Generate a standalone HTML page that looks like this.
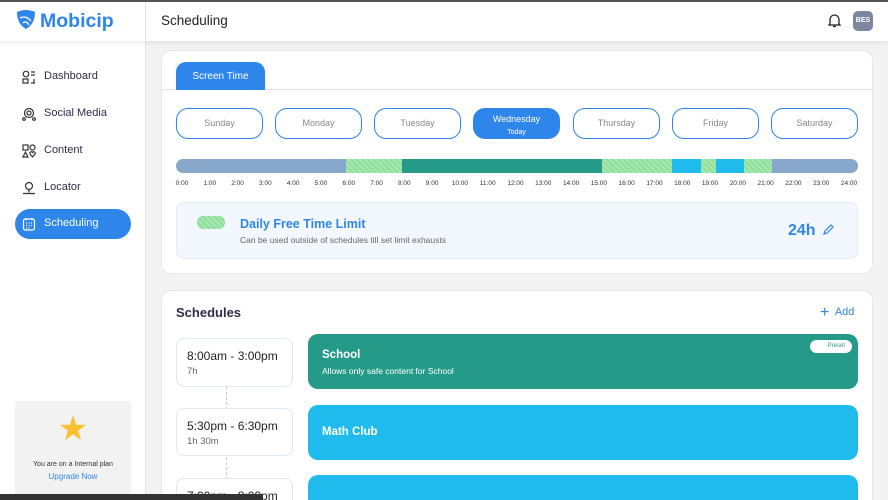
<!DOCTYPE html>
<html><head><style>
*{box-sizing:border-box;margin:0;padding:0}
html,body{width:888px;height:500px;overflow:hidden}
body{background:#f3f3f3;font-family:"Liberation Sans",sans-serif;position:relative;color:#2a2f45;line-height:1.2}
.abs{position:absolute}
.hdr{left:0;top:0;width:888px;height:41px;background:#fff;border-top:2px solid #555;box-shadow:0 2px 4px rgba(0,0,0,.08);z-index:2}
.side{left:0;top:41px;width:146px;height:459px;background:#fff;border-right:1px solid #e6e6e6}
.nav{position:absolute;left:22px;font-size:11px;color:#2a2f45;display:flex;align-items:center;gap:8px;height:16px}
.nav svg{flex:none}
.card{background:#fff;border-radius:10px;border:1px solid #e8e8e8}
.pill{position:absolute;top:108px;width:87px;height:31px;border:1.5px solid #2f86ea;border-radius:12px;font-size:9px;color:#888;text-align:center;line-height:29px}
.tk{position:absolute;top:180px;font-size:6.5px;color:#333;transform:translateX(-50%)}
.seg{position:absolute;top:159px;height:14px}
.g{background:repeating-linear-gradient(45deg,#8fdf9b 0 2px,#a7e8b2 2px 4px)}
.tm{position:absolute;left:176px;width:117px;background:#fff;border:1px solid #dde8f3;border-radius:8px;padding:10px 10px}
.tm b{display:block;font-weight:normal;font-size:12px;line-height:14px;color:#222;margin-bottom:3px}
.tm span{display:block;font-size:9.5px;line-height:11px;color:#666}
.sc{position:absolute;left:308px;width:550px;border-radius:10px;color:#fff;padding-left:14px}
</style></head><body>
<div class="abs hdr">
 <svg class="abs" style="left:15px;top:7px" width="22" height="22" viewBox="0 0 22 22"><path d="M2 3 Q11 -1 20 3 Q20 15 11 20 Q2 15 2 3Z" fill="#2f86ea"/><path d="M5 9 Q11 6 16 12 M8 14 Q11 11 14 16" stroke="#fff" stroke-width="1.3" fill="none"/></svg>
 <div class="abs" style="left:40px;top:8px;font-size:19.5px;line-height:22px;font-weight:bold;color:#2f86ea">Mobicip</div>
 <div class="abs" style="left:145px;top:0;width:1px;height:39px;background:#e4e4e4"></div>
 <div class="abs" style="left:161px;top:11px;font-size:13.5px;line-height:16px;color:#222">Scheduling</div>
 <svg class="abs" style="left:828px;top:11px" width="13" height="15" viewBox="0 0 13 15"><path d="M2 11 V6.5 A4.5 4.5 0 0 1 11 6.5 V11 L12 12 H1Z M5 13.5 H8" stroke="#222" stroke-width="1.3" fill="none"/></svg>
 <div class="abs" style="left:853px;top:9px;width:20px;height:20px;border-radius:5px;background:#7c86a0;color:#fff;font-size:7px;font-weight:bold;text-align:center;line-height:20px">BES</div>
</div>
<div class="abs side">
 <div class="nav" style="top:28px"><svg width="14" height="14" viewBox="0 0 14 14" fill="none" stroke="#333" stroke-width="1.2"><circle cx="4" cy="4" r="2.8"/><path d="M9 2h4M9 5h4M1 9h5v4H1zM9 13h4M12 9v4"/></svg>Dashboard</div>
 <div class="nav" style="top:65px"><svg width="14" height="14" viewBox="0 0 14 14" fill="none" stroke="#333" stroke-width="1.2"><circle cx="7" cy="6" r="4.5"/><circle cx="7" cy="6" r="2"/><circle cx="2" cy="12" r="1.3"/><circle cx="12" cy="12" r="1.3"/></svg>Social Media</div>
 <div class="nav" style="top:102px"><svg width="14" height="14" viewBox="0 0 14 14" fill="none" stroke="#333" stroke-width="1.2"><rect x="1" y="1" width="5" height="5"/><circle cx="10.5" cy="3.5" r="2.5"/><path d="M3.5 8L6 13H1z"/><path d="M10.5 13L8 10a1.4 1.4 0 0 1 2.5-1.5A1.4 1.4 0 0 1 13 10z"/></svg>Content</div>
 <div class="nav" style="top:139px"><svg width="14" height="14" viewBox="0 0 14 14" fill="none" stroke="#333" stroke-width="1.2"><circle cx="7" cy="5" r="3.5"/><path d="M7 8.5v3M1 12.5h12"/></svg>Locator</div>
 <div class="abs" style="left:15px;top:168px;width:116px;height:30px;border-radius:15px;background:#2f86ea"></div>
 <div class="nav" style="top:175px;color:#fff"><svg width="14" height="14" viewBox="0 0 14 14" fill="none" stroke="#fff" stroke-width="1.2"><rect x="1.5" y="2" width="11" height="11" rx="2"/><path d="M4 1v2M10 1v2M4 6h1M6.5 6h1M9 6h1M4 8.5h1M6.5 8.5h1M9 8.5h1M4 11h1M6.5 11h1"/></svg>Scheduling</div>
 <div class="abs" style="left:15px;top:360px;width:116px;height:100px;background:#f2f2f2;border-radius:3px;text-align:center">
  <div style="font-size:34px;color:#fbc02d;margin-top:8px;line-height:40px">★</div>
  <div style="font-size:7px;color:#333;margin-top:12px">You are on a Internal plan</div>
  <div style="font-size:8px;color:#2f86ea;margin-top:3px">Upgrade Now</div>
 </div>
</div>
<div class="abs card" style="left:161px;top:50px;width:712px;height:224px"></div>
<div class="abs" style="left:162px;top:89px;width:710px;height:1px;background:#e4e4e4"></div>
<div class="abs" style="left:176px;top:62px;width:89px;height:28px;background:#2f86ea;border-radius:10px 10px 0 0;color:#fff;font-size:10px;text-align:center;line-height:30px">Screen Time</div>
<div class="pill" style="left:176px">Sunday</div>
<div class="pill" style="left:275px">Monday</div>
<div class="pill" style="left:374px">Tuesday</div>
<div class="pill" style="left:473px;background:#2f86ea;color:#fff;line-height:12px;padding-top:4px;font-size:9px;width:87px">Wednesday<br><span style="font-size:7px">Today</span></div>
<div class="pill" style="left:573px">Thursday</div>
<div class="pill" style="left:672px">Friday</div>
<div class="pill" style="left:771px">Saturday</div>
<div class="seg" style="left:176px;width:682px;background:#87a7cb;border-radius:7px"></div>
<div class="seg g" style="left:346px;width:57px"></div>
<div class="seg" style="left:402px;width:200px;background:#269a89"></div>
<div class="seg g" style="left:602px;width:71px"></div>
<div class="seg" style="left:672px;width:30px;background:#1fbbec"></div>
<div class="seg g" style="left:701px;width:15px"></div>
<div class="seg" style="left:716px;width:28px;background:#1fbbec"></div>
<div class="seg g" style="left:744px;width:28px"></div>
<div id="tks"></div>
<div class="abs" style="left:176px;top:202px;width:682px;height:57px;background:#f3f8fe;border:1px solid #e2ecf7;border-radius:8px"></div>
<div class="abs g" style="left:197px;top:216px;width:28px;height:13px;border-radius:6px"></div>
<div class="abs" style="left:240px;top:217px;font-size:12.5px;font-weight:bold;color:#2f86ea">Daily Free Time Limit</div>
<div class="abs" style="left:240px;top:235px;font-size:8.5px;color:#666">Can be used outside of schedules till set limit exhausts</div>
<div class="abs" style="left:788px;top:221px;font-size:16px;font-weight:bold;color:#2f86ea">24h</div>
<svg class="abs" style="left:822px;top:223px" width="13" height="13" viewBox="0 0 13 13"><path d="M2 11 L3 8 L9 2 L11 4 L5 10Z" stroke="#2f86ea" stroke-width="1.2" fill="none"/></svg>
<div class="abs card" style="left:161px;top:290px;width:712px;height:220px"></div>
<div class="abs" style="left:176px;top:305px;font-size:13px;font-weight:bold;color:#2a2f45">Schedules</div>
<div class="abs" style="left:820px;top:303px;font-size:11px;color:#2f86ea"><span style="font-size:16px;vertical-align:-2px">+</span>&nbsp; Add</div>
<div class="abs" style="left:226px;top:387px;height:113px;border-left:1px dashed #ccc"></div>
<div class="tm" style="top:338px;height:49px"><b>8:00am - 3:00pm</b><span>7h</span></div>
<div class="tm" style="top:408px;height:48px"><b>5:30pm - 6:30pm</b><span>1h 30m</span></div>
<div class="tm" style="top:478px;height:40px"><b>7:00pm - 8:00pm</b></div>
<div class="sc" style="top:334px;height:55px;background:#269a89;padding-top:15px"><div style="font-size:11.5px;font-weight:bold">School</div><div style="font-size:8.5px;margin-top:3px">Allows only safe content for School</div>
 <div class="abs" style="right:6px;top:6px;width:42px;height:13px;background:#fff;border-radius:7px;color:#269a89;font-size:6px;line-height:13px;text-align:right;padding-right:7px">Preset</div></div>
<div class="sc" style="top:405px;height:55px;background:#1fbbec;font-size:11.5px;font-weight:bold;line-height:55px">Math Club</div>
<div class="sc" style="top:475px;height:25px;border-radius:10px 10px 0 0;background:#1fbbec"></div>
<div class="abs" style="left:0;top:494px;width:262px;height:6px;background:#333"></div>
<script>
var h='';for(var i=0;i<=24;i++){var x=182+i*(667/24);h+='<div class="tk" style="left:'+x+'px">'+i+':00</div>';}
document.getElementById('tks').innerHTML=h;
</script>
</body></html>
